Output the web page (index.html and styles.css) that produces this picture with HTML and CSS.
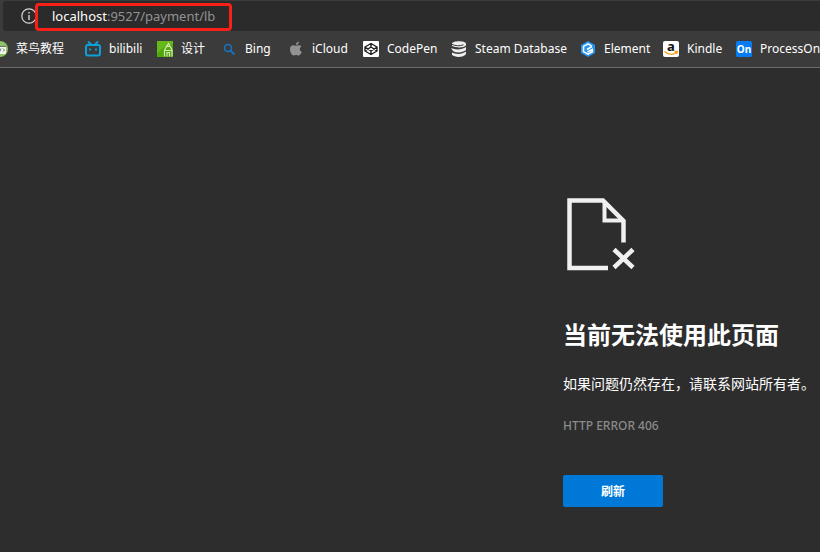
FILE: index.html
```html
<!DOCTYPE html>
<html lang="zh-CN">
<head>
<meta charset="utf-8">
<title>localhost</title>
<link rel="stylesheet" href="styles.css">
</head>
<body>
<header class="chrome">
  <div class="address">
    <button class="info" type="button" aria-label="Site information">
      <svg width="16" height="16" viewBox="0 0 16 16"><circle cx="8" cy="8" r="7.2" fill="none" stroke="#d8d8d8" stroke-width="1.2"/><path d="M8 7v5M8 4v1.5" stroke="#d8d8d8" stroke-width="1.4"/></svg>
    </button>
    <div class="url"><span class="host">localhost</span>:9527/payment/lb</div>
  </div>
  <nav class="bookmarks">
    <a href="#"><svg viewBox="0 0 16 16"><circle cx="8" cy="8" r="8" fill="#8bc565"/><rect x="2" y="4" width="12" height="9" rx="1" fill="#f4f7f1"/><path d="M2 5.2h12" stroke="#58734a" stroke-width="1.5"/><path d="M6 7.5 4.5 9 6 10.5M9 7.5 7.5 11M11 7.5 12.5 9 11 10.5" fill="none" stroke="#66705f"/></svg>菜鸟教程</a>
    <a href="#"><svg viewBox="0 0 16 16"><rect x="1" y="4" width="14" height="10.5" rx="2" fill="none" stroke="#0ba1d8" stroke-width="2"/><path d="M3.5 1 6 3.5M12.5 1 10 3.5" stroke="#0ba1d8" stroke-width="1.8" stroke-linecap="round"/><path d="M5 7.5v2M11 7.5v2" stroke="#0ba1d8" stroke-width="1.8"/></svg>bilibili</a>
    <a href="#"><svg viewBox="0 0 16 16"><path d="M0 0h16v16H0z" fill="#50a70b"/><path d="M0 0h16v3Q6 5 0 13z" fill="#66b91b"/><path d="M7.5 15.5V9L11.5 2.5 15 9v6.5M7.5 9.5h7.5M10 15.5v-4h2.5v4M10 5.5h3" fill="none" stroke="#d2e9ae" stroke-width="1.2"/></svg>设计</a>
    <a href="#"><svg viewBox="0 0 16 16"><circle cx="7" cy="7" r="3.5" fill="none" stroke="#1673c5" stroke-width="1.6"/><path d="m9.5 9.5 4 4" stroke="#1673c5" stroke-width="1.8"/></svg>Bing</a>
    <a href="#"><svg viewBox="0 0 16 16"><path d="M8 4.8C6.5 4.3 5.7 3.9 4.5 4.3 2.3 5 1.700 7.2 2.1 9.5c.4 2.500 1.900 5 3.400 5 .9 0 1.400-.6 2.500-.6s1.600.6 2.500.6c1.400 0 2.700-2.100 3.200-3.600-2.400-1.100-2.400-4.200-.3-5.300C12.400 4 10.500 3.800 8 4.800zM7.900 4C7.700 2.200 9.200.6 10.900.4 11.100 2.200 9.600 4 7.900 4z" fill="#929292"/></svg>iCloud</a>
    <a href="#"><svg viewBox="0 0 16 16"><rect width="16" height="16" rx="1" fill="#fff"/><path d="M8 2.5 14 6v4l-6 3.500L2 10V6zM2 6l6 4 6-4M2 10l6-4 6 4M8 2.500V6M8 10v3.500" fill="none" stroke="#202020" stroke-width="1.4" stroke-linejoin="round"/></svg>CodePen</a>
    <a href="#"><svg viewBox="0 0 16 16"><path d="M1 2.5C2-.5 14-.5 15 2.500v2C13 7 5 7 1 5zM0 7c4 2 11 2 15-1v3C12 12 4 12 2 10zM1 11.500c4 2 10 2 14-1V13c-2 3.500-11 4-14 .8z" fill="#eee"/><path d="M1 3.300c3 1.800 8 1.900 11.500.5" fill="none" stroke="#3b3b3b"/></svg>Steam Database</a>
    <a href="#"><svg viewBox="0 0 16 16"><path d="m8 0 7 4v8l-7 4-7-4V4z" fill="#2496f3"/><path d="M11.5 4.800 8 2.800 3.500 5.400v5.200L8 13.200l4.300-2.500V8.500L7.500 11M7 8.500l5-3" fill="none" stroke="#fff" stroke-width="1.5"/></svg>Element</a>
    <a href="#"><svg viewBox="0 0 16 16"><rect width="16" height="16" rx="2" fill="#fff"/><text class="amazon" x="8" y="10" text-anchor="middle">a</text><path d="M1.500 10.500c4 3.500 8.500 3.500 12 1M11.500 10.500h3l-1 2.500" fill="none" stroke="#f79b18" stroke-width="1.300"/></svg>Kindle</a>
    <a href="#"><svg viewBox="0 0 16 16"><rect width="16" height="16" rx="1.5" fill="#087bf0"/><text class="process" x="8" y="12" text-anchor="middle">On</text></svg>ProcessOn</a>
  </nav>
</header>
<main class="page">
  <section class="error">
    <svg class="doc" width="72" height="76" viewBox="0 0 72 76" fill="none" stroke="#f0f0f0"><path d="M45 71H6.500V3.500H40L60.500 24v21.500" stroke-width="4.500"/><path d="M41.500 4v19.500H60" stroke-width="4"/><path d="m51 52.500 19 18M70 52.500l-19 18" stroke-width="4.500"/></svg>
    <h1>当前无法使用此页面</h1>
    <p class="message">如果问题仍然存在，请联系网站所有者。</p>
    <p class="code">HTTP ERROR 406</p>
    <button class="refresh" type="button">刷新</button>
  </section>
</main>
</body>
</html>
```
FILE: styles.css
```css
* { box-sizing: border-box; }
body {
  margin: 0;
  min-height: 100vh;
  background: #2d2d2d;
  color: #fff;
  font-family: "Noto Sans", "Noto Sans CJK SC", sans-serif;
}
.chrome {
  padding-top: 1px;
  background: #3b3b3b;
  border-bottom: 1px solid #6b6b6b;
  overflow: hidden;
}
.address {
  display: flex;
  align-items: center;
  height: 30px;
  margin-left: 3px;
  padding-left: 18px;
  background: #2b2b2b;
  border-radius: 3px 0 0 3px;
}
.info {
  display: flex;
  padding: 0;
  border: 0;
  background: none;
}
.url {
  height: 28px;
  margin-top: 2px;
  margin-left: -2px;
  padding: 0 14px;
  border: 3px solid #fb2017;
  border-radius: 4px;
  color: #929292;
  font-size: 13px;
  line-height: 20px;
  white-space: nowrap;
}
.host { color: #fff; }
.bookmarks {
  display: grid;
  grid-template-columns: 93px 72px 64px 67px 75px 88px 129px 83px 73px auto;
  height: 36px;
  margin-left: -8px;
  align-items: center;
}
.bookmarks a {
  display: flex;
  align-items: center;
  gap: 8px;
  color: #fff;
  font-size: 12px;
  line-height: 18px;
  text-decoration: none;
  white-space: nowrap;
}
.bookmarks svg { flex: none; width: 16px; height: 16px; }
.amazon { font: bold 13px "Noto Sans", sans-serif; fill: #111; }
.process { font: bold 10px "Noto Sans", sans-serif; fill: #fff; }
.page { display: flex; justify-content: flex-end; padding: 129px 5px 44px 16px; }
.error { display: flex; flex-direction: column; align-items: flex-start; }
h1 {
  margin: 44px 0 0;
  font-size: 24px;
  line-height: 36px;
}
.message { margin: 19px 0 0; font-size: 14px; line-height: 24px; }
.code {
  margin: 21px 0 0;
  color: #8a8a8a;
  font-size: 12px;
  font-weight: 500;
  line-height: 18px;
}
.refresh {
  width: 100px;
  height: 32px;
  margin-top: 40px;
  padding: 0;
  border: 0;
  border-radius: 2px;
  background: #0078d7;
  color: #fff;
  font: bold 12px "Noto Sans", "Noto Sans CJK SC", sans-serif;
}
```
